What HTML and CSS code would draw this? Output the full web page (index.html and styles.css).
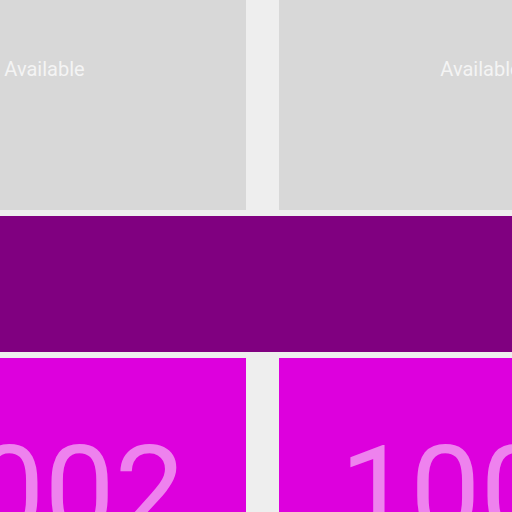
FILE: index.html
```html
<!DOCTYPE html>
<html>
<head>
<meta charset="utf-8">
<link rel="stylesheet" href="styles.css">
</head>
<body>
<div class="grid">
  <div class="tile tile--empty"><span class="label">Available</span></div>
  <div class="tile tile--empty"><span class="label">Available</span></div>
  <div class="banner"></div>
  <div class="tile tile--room"><span class="number">1002</span></div>
  <div class="tile tile--room"><span class="number">1003</span></div>
</div>
</body>
</html>
```
FILE: styles.css
```css
html, body {
  margin: 0;
  padding: 0;
  background: #eeeeee;
  overflow: hidden;
  width: 512px;
  height: 512px;
}
.grid {
  display: grid;
  grid-template-columns: 403px 403px;
  grid-template-rows: 210px 136px 200px;
  column-gap: 33px;
  row-gap: 6px;
  width: 839px;
  margin-left: -157px;
  font-family: Roboto, "Noto Sans", sans-serif;
}
.tile {
  display: flex;
  justify-content: center;
  align-items: flex-start;
}
.tile--empty {
  background: #d8d8d8;
  padding-top: 57px;
  box-sizing: border-box;
}
.label {
  color: #f4f4f4;
  font-size: 20px;
  line-height: 24px;
}
.banner {
  grid-column: 1 / -1;
  background: #800080;
}
.tile--room {
  background: #dd00dd;
  padding-top: 71px;
  box-sizing: border-box;
}
.number {
  color: #ee82ee;
  font-size: 125px;
  line-height: 125px;
}
```
